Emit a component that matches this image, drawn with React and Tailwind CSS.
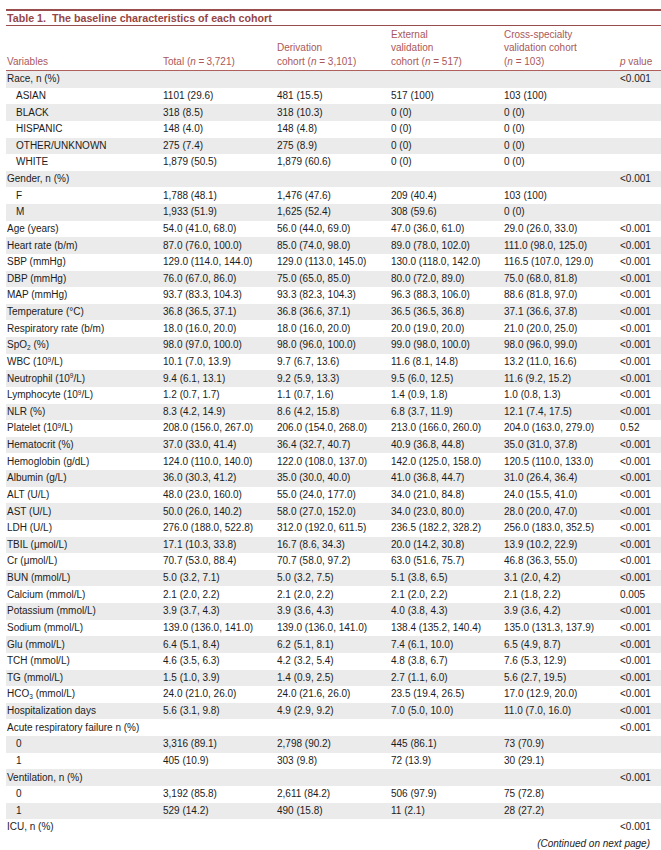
import React from 'react';

// Table 1 — baseline characteristics, journal-style table
const L = (unit) => <>({unit})</>;
const Giga = ({ name }) => (
  <>
    {name} (10<sup className="text-[6.5px]">9</sup>/L)
  </>
);

const rows = [
  { label: 'Race, n (%)', p: '<0.001' },
  { label: 'ASIAN', sub: true, v: ['1101 (29.6)', '481 (15.5)', '517 (100)', '103 (100)'] },
  { label: 'BLACK', sub: true, v: ['318 (8.5)', '318 (10.3)', '0 (0)', '0 (0)'] },
  { label: 'HISPANIC', sub: true, v: ['148 (4.0)', '148 (4.8)', '0 (0)', '0 (0)'] },
  { label: 'OTHER/UNKNOWN', sub: true, v: ['275 (7.4)', '275 (8.9)', '0 (0)', '0 (0)'] },
  { label: 'WHITE', sub: true, v: ['1,879 (50.5)', '1,879 (60.6)', '0 (0)', '0 (0)'] },
  { label: 'Gender, n (%)', p: '<0.001' },
  { label: 'F', sub: true, v: ['1,788 (48.1)', '1,476 (47.6)', '209 (40.4)', '103 (100)'] },
  { label: 'M', sub: true, v: ['1,933 (51.9)', '1,625 (52.4)', '308 (59.6)', '0 (0)'] },
  { label: 'Age (years)', v: ['54.0 (41.0, 68.0)', '56.0 (44.0, 69.0)', '47.0 (36.0, 61.0)', '29.0 (26.0, 33.0)'], p: '<0.001' },
  { label: 'Heart rate (b/m)', v: ['87.0 (76.0, 100.0)', '85.0 (74.0, 98.0)', '89.0 (78.0, 102.0)', '111.0 (98.0, 125.0)'], p: '<0.001' },
  { label: 'SBP (mmHg)', v: ['129.0 (114.0, 144.0)', '129.0 (113.0, 145.0)', '130.0 (118.0, 142.0)', '116.5 (107.0, 129.0)'], p: '<0.001' },
  { label: 'DBP (mmHg)', v: ['76.0 (67.0, 86.0)', '75.0 (65.0, 85.0)', '80.0 (72.0, 89.0)', '75.0 (68.0, 81.8)'], p: '<0.001' },
  { label: 'MAP (mmHg)', v: ['93.7 (83.3, 104.3)', '93.3 (82.3, 104.3)', '96.3 (88.3, 106.0)', '88.6 (81.8, 97.0)'], p: '<0.001' },
  { label: 'Temperature (°C)', v: ['36.8 (36.5, 37.1)', '36.8 (36.6, 37.1)', '36.5 (36.5, 36.8)', '37.1 (36.6, 37.8)'], p: '<0.001' },
  { label: 'Respiratory rate (b/m)', v: ['18.0 (16.0, 20.0)', '18.0 (16.0, 20.0)', '20.0 (19.0, 20.0)', '21.0 (20.0, 25.0)'], p: '<0.001' },
  { label: <>SpO<sub className="text-[6.5px]">2</sub> (%)</>, v: ['98.0 (97.0, 100.0)', '98.0 (96.0, 100.0)', '99.0 (98.0, 100.0)', '98.0 (96.0, 99.0)'], p: '<0.001' },
  { label: <Giga name="WBC" />, v: ['10.1 (7.0, 13.9)', '9.7 (6.7, 13.6)', '11.6 (8.1, 14.8)', '13.2 (11.0, 16.6)'], p: '<0.001' },
  { label: <Giga name="Neutrophil" />, v: ['9.4 (6.1, 13.1)', '9.2 (5.9, 13.3)', '9.5 (6.0, 12.5)', '11.6 (9.2, 15.2)'], p: '<0.001' },
  { label: <Giga name="Lymphocyte" />, v: ['1.2 (0.7, 1.7)', '1.1 (0.7, 1.6)', '1.4 (0.9, 1.8)', '1.0 (0.8, 1.3)'], p: '<0.001' },
  { label: 'NLR (%)', v: ['8.3 (4.2, 14.9)', '8.6 (4.2, 15.8)', '6.8 (3.7, 11.9)', '12.1 (7.4, 17.5)'], p: '<0.001' },
  { label: <Giga name="Platelet" />, v: ['208.0 (156.0, 267.0)', '206.0 (154.0, 268.0)', '213.0 (166.0, 260.0)', '204.0 (163.0, 279.0)'], p: '0.52' },
  { label: 'Hematocrit (%)', v: ['37.0 (33.0, 41.4)', '36.4 (32.7, 40.7)', '40.9 (36.8, 44.8)', '35.0 (31.0, 37.8)'], p: '<0.001' },
  { label: 'Hemoglobin (g/dL)', v: ['124.0 (110.0, 140.0)', '122.0 (108.0, 137.0)', '142.0 (125.0, 158.0)', '120.5 (110.0, 133.0)'], p: '<0.001' },
  { label: 'Albumin (g/L)', v: ['36.0 (30.3, 41.2)', '35.0 (30.0, 40.0)', '41.0 (36.8, 44.7)', '31.0 (26.4, 36.4)'], p: '<0.001' },
  { label: 'ALT (U/L)', v: ['48.0 (23.0, 160.0)', '55.0 (24.0, 177.0)', '34.0 (21.0, 84.8)', '24.0 (15.5, 41.0)'], p: '<0.001' },
  { label: 'AST (U/L)', v: ['50.0 (26.0, 140.2)', '58.0 (27.0, 152.0)', '34.0 (23.0, 80.0)', '28.0 (20.0, 47.0)'], p: '<0.001' },
  { label: 'LDH (U/L)', v: ['276.0 (188.0, 522.8)', '312.0 (192.0, 611.5)', '236.5 (182.2, 328.2)', '256.0 (183.0, 352.5)'], p: '<0.001' },
  { label: <>TBIL {L('μmol/L')}</>, v: ['17.1 (10.3, 33.8)', '16.7 (8.6, 34.3)', '20.0 (14.2, 30.8)', '13.9 (10.2, 22.9)'], p: '<0.001' },
  { label: <>Cr {L('μmol/L')}</>, v: ['70.7 (53.0, 88.4)', '70.7 (58.0, 97.2)', '63.0 (51.6, 75.7)', '46.8 (36.3, 55.0)'], p: '<0.001' },
  { label: 'BUN (mmol/L)', v: ['5.0 (3.2, 7.1)', '5.0 (3.2, 7.5)', '5.1 (3.8, 6.5)', '3.1 (2.0, 4.2)'], p: '<0.001' },
  { label: 'Calcium (mmol/L)', v: ['2.1 (2.0, 2.2)', '2.1 (2.0, 2.2)', '2.1 (2.0, 2.2)', '2.1 (1.8, 2.2)'], p: '0.005' },
  { label: 'Potassium (mmol/L)', v: ['3.9 (3.7, 4.3)', '3.9 (3.6, 4.3)', '4.0 (3.8, 4.3)', '3.9 (3.6, 4.2)'], p: '<0.001' },
  { label: 'Sodium (mmol/L)', v: ['139.0 (136.0, 141.0)', '139.0 (136.0, 141.0)', '138.4 (135.2, 140.4)', '135.0 (131.3, 137.9)'], p: '<0.001' },
  { label: 'Glu (mmol/L)', v: ['6.4 (5.1, 8.4)', '6.2 (5.1, 8.1)', '7.4 (6.1, 10.0)', '6.5 (4.9, 8.7)'], p: '<0.001' },
  { label: 'TCH (mmol/L)', v: ['4.6 (3.5, 6.3)', '4.2 (3.2, 5.4)', '4.8 (3.8, 6.7)', '7.6 (5.3, 12.9)'], p: '<0.001' },
  { label: 'TG (mmol/L)', v: ['1.5 (1.0, 3.9)', '1.4 (0.9, 2.5)', '2.7 (1.1, 6.0)', '5.6 (2.7, 19.5)'], p: '<0.001' },
  { label: <>HCO<sub className="text-[6.5px]">3</sub> (mmol/L)</>, v: ['24.0 (21.0, 26.0)', '24.0 (21.6, 26.0)', '23.5 (19.4, 26.5)', '17.0 (12.9, 20.0)'], p: '<0.001' },
  { label: 'Hospitalization days', v: ['5.6 (3.1, 9.8)', '4.9 (2.9, 9.2)', '7.0 (5.0, 10.0)', '11.0 (7.0, 16.0)'], p: '<0.001' },
  { label: 'Acute respiratory failure n (%)', p: '<0.001' },
  { label: '0', sub: true, v: ['3,316 (89.1)', '2,798 (90.2)', '445 (86.1)', '73 (70.9)'] },
  { label: '1', sub: true, v: ['405 (10.9)', '303 (9.8)', '72 (13.9)', '30 (29.1)'] },
  { label: 'Ventilation, n (%)', p: '<0.001' },
  { label: '0', sub: true, v: ['3,192 (85.8)', '2,611 (84.2)', '506 (97.9)', '75 (72.8)'] },
  { label: '1', sub: true, v: ['529 (14.2)', '490 (15.8)', '11 (2.1)', '28 (27.2)'] },
  { label: 'ICU, n (%)', p: '<0.001' },
];

const cols = 'grid grid-cols-[157px_114px_114px_113px_116px_1fr]';

export default function App() {
  return (
    <div className="bg-white w-[661px] h-[850px] pt-[9px] pl-[6px] text-[10px] text-[#1c1c1c] font-['Liberation_Sans',Arial,sans-serif]">
      {/* Title */}
      <div className="border-t-2 border-b-[1.5px] border-[#9a4d4d] h-[17px] flex items-center pl-px">
        <span className="font-bold text-[10.7px] text-[#954646] leading-none">
          Table 1.&nbsp; The baseline characteristics of each cohort
        </span>
      </div>

      {/* Column headers */}
      <div className={`${cols} items-end h-[45px] pb-[2px] border-b border-[#b0605c] text-[#a9585a] leading-[13.5px]`}>
        <div className="pl-px">Variables</div>
        <div>
          Total (<i>n</i> =&thinsp;3,721)
        </div>
        <div>
          Derivation
          <br />
          cohort (<i>n</i> = 3,101)
        </div>
        <div>
          External
          <br />
          validation
          <br />
          cohort (<i>n</i> = 517)
        </div>
        <div>
          Cross-specialty
          <br />
          validation cohort
          <br />(<i>n</i> = 103)
        </div>
        <div>
          <i>p</i> value
        </div>
      </div>

      {/* Body */}
      <div>
        {rows.map((r, i) => (
          <div
            key={i}
            className={`${cols} h-[16.63px] items-center leading-none ${i % 2 === 0 ? 'bg-[#ebebeb]' : 'bg-white'}`}
          >
            <div className={r.sub ? 'pl-[10px]' : 'pl-px'}>{r.label}</div>
            {[0, 1, 2, 3].map((k) => (
              <div key={k}>{r.v ? r.v[k] : ''}</div>
            ))}
            <div>{r.p || ''}</div>
          </div>
        ))}
      </div>

      <div className="text-right italic pr-[11px] pt-[1px] leading-[13px]">(Continued on next page)</div>
    </div>
  );
}
